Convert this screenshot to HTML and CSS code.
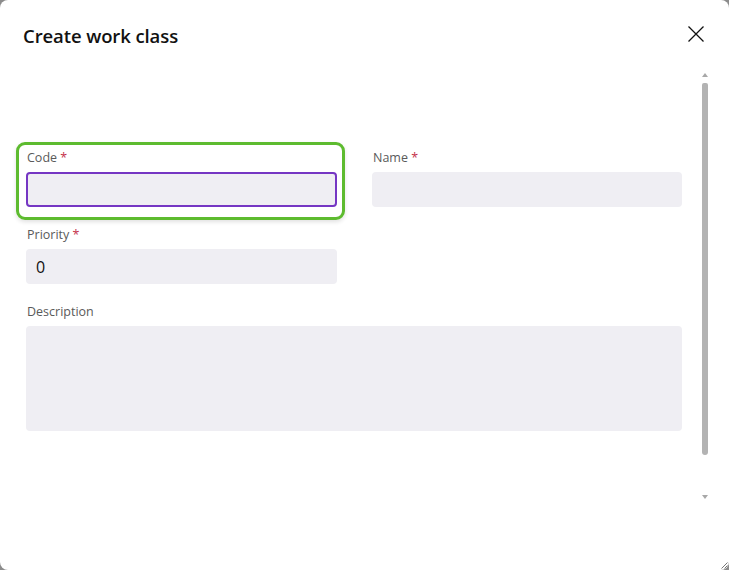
FILE: index.html
```html
<!DOCTYPE html>
<html>
<head>
<meta charset="utf-8">
<link rel="stylesheet" href="styles.css">
</head>
<body>
<div class="dialog">
  <header class="dialog-header">
    <h1 class="title">Create work class</h1>
    <button class="close" aria-label="Close">
      <svg width="16" height="16" viewBox="0 0 16 16"><path d="M0.5 0.5 L15.5 15.5 M15.5 0.5 L0.5 15.5" stroke="#111" stroke-width="1.3" fill="none"/></svg>
    </button>
  </header>
  <div class="dialog-body">
    <form class="form">
      <div class="field focused">
        <label class="label">Code <span class="req">*</span></label>
        <input class="input input-active" type="text">
      </div>
      <div class="field">
        <label class="label">Name <span class="req">*</span></label>
        <input class="input" type="text">
      </div>
      <div class="field">
        <label class="label">Priority <span class="req">*</span></label>
        <input class="input" type="text" value="0">
      </div>
      <div class="field"></div>
      <div class="field wide">
        <label class="label">Description</label>
        <textarea class="input textarea"></textarea>
      </div>
    </form>
  </div>
  <div class="scrollbar">
    <span class="arrow up"></span>
    <span class="thumb"></span>
    <span class="arrow down"></span>
  </div>
  <span class="resize">
    <svg width="7" height="7" viewBox="0 0 7 7"><path d="M0.5 6.5 L6.5 0.5 M3.5 6.5 L6.5 3.5" stroke="#777" stroke-width="1" fill="none"/></svg>
  </span>
</div>
</body>
</html>
```

FILE: styles.css
```css
* { box-sizing: border-box; }
html, body {
  margin: 0;
  padding: 0;
  width: 729px;
  height: 570px;
  background: #8c8c8c;
  overflow: hidden;
}
body {
  font-family: "Open Sans", "Noto Sans", sans-serif;
}
.dialog {
  position: relative;
  width: 729px;
  height: 570px;
  background: #fff;
  border-radius: 8px;
  overflow: hidden;
}
.dialog-header {
  display: flex;
  justify-content: space-between;
  align-items: center;
  padding: 24px 24px 0 23px;
  height: 48px;
}
.title {
  margin: 0;
  font-size: 18.5px;
  line-height: 24px;
  font-weight: 600;
  color: #111;
  letter-spacing: -0.1px;
}
.close {
  border: 0;
  background: none;
  padding: 0;
  width: 16px;
  height: 16px;
  margin-top: -4px;
  margin-right: 1px;
  display: flex;
}
.dialog-body {
  padding: 101px 47px 0 26px;
}
.form {
  display: grid;
  grid-template-columns: 311px 310px;
  column-gap: 35px;
  row-gap: 19px;
}
.field {
  position: relative;
  display: flex;
  flex-direction: column;
}
.field.wide { grid-column: 1 / span 2; }
.field.focused::before {
  content: "";
  position: absolute;
  top: -7px;
  left: -10px;
  right: -8px;
  bottom: -13px;
  border: 3px solid #5dbb2f;
  border-radius: 9px;
  box-shadow: 0 2px 4px rgba(0,0,0,0.12);
  pointer-events: none;
}
.label {
  font-size: 12.5px;
  line-height: 16px;
  color: #5a5a5a;
  padding-top: 1px;
  margin-bottom: 6px;
  padding-left: 1px;
}
.req { color: #c4314b; }
.input {
  height: 35px;
  border: 0;
  border-radius: 4px;
  background: #efeef3;
  font-family: "Open Sans", "Noto Sans", sans-serif;
  font-size: 16px;
  color: #111;
  padding: 0 10px;
  outline: none;
}
.input-active {
  border: 2px solid #7536c3;
  border-radius: 4px;
}
.textarea {
  height: 105px;
  resize: none;
}
.scrollbar {
  position: absolute;
  top: 70px;
  right: 20px;
  width: 8px;
  height: 435px;
  display: flex;
  flex-direction: column;
  align-items: center;
}
.arrow {
  width: 0;
  height: 0;
  border-left: 3px solid transparent;
  border-right: 3px solid transparent;
}
.arrow.up {
  border-bottom: 4px solid #a8a8a8;
  margin-top: 3px;
}
.arrow.down {
  border-top: 4px solid #a8a8a8;
  margin-top: 40px;
}
.thumb {
  width: 6px;
  height: 372px;
  margin-top: 6px;
  background: #b3b3b3;
  border-radius: 2px 2px 3px 3px;
}
.resize {
  position: absolute;
  right: 1px;
  bottom: 1px;
  display: flex;
}
```
